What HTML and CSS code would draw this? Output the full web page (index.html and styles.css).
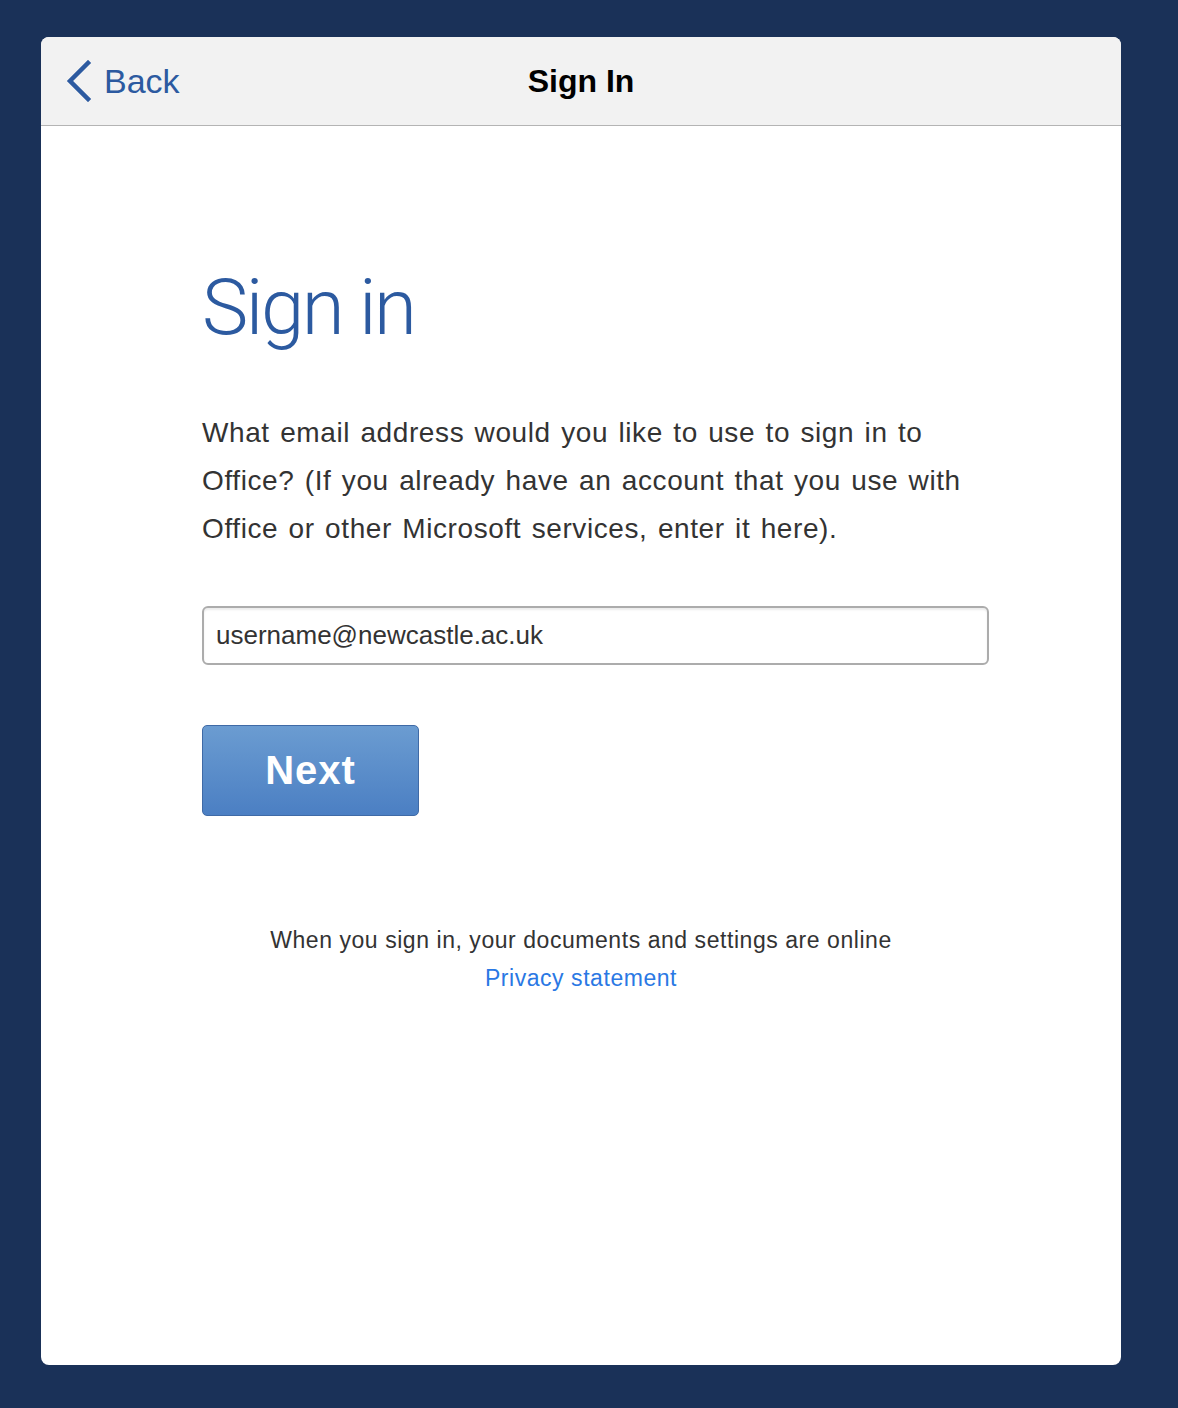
FILE: index.html
```html
<!DOCTYPE html>
<html lang="en">
<head>
  <meta charset="UTF-8">
  <title>Sign In</title>
  <link rel="stylesheet" href="styles.css">
</head>
<body>
  <div class="sheet">
    <div class="nav">
      <a class="back" href="#">
        <svg class="chevron" width="26" height="42" viewBox="0 0 26 42">
          <path d="M22 3 L4 21 L22 39" fill="none" stroke="#2c5aa0" stroke-width="4.5" stroke-linecap="square"/>
        </svg>
        <span>Back</span>
      </a>
      <div class="nav-title">Sign In</div>
    </div>

    <div class="content">
      <h1>Sign in</h1>
      <p class="intro">What email address would you like to use to sign in to Office? (If you already have an account that you use with Office or other Microsoft services, enter it here).</p>

      <form id="signinForm">
        <input type="email" class="email" value="username@newcastle.ac.uk">
        <button type="submit" class="next">Next</button>
      </form>
    </div>

    <div class="footer">
      <div>When you sign in, your documents and settings are online</div>
      <a href="#">Privacy statement</a>
    </div>
  </div>
</body>
</html>
```

FILE: styles.css
```css
body {
  margin: 0;
  padding: 37px 57px 43px 41px;
  background-color: #1a3158;
  font-family: "Liberation Sans", Arial, sans-serif;
  color: #333;
}
.sheet {
  height: 1328px;
  background-color: #fff;
  border-radius: 8px;
  overflow: hidden;
  display: flex;
  flex-direction: column;
}
.nav {
  position: relative;
  height: 89px;
  box-sizing: border-box;
  background-color: #f2f2f2;
  border-bottom: 1px solid #b4b4b4;
  display: flex;
  align-items: center;
  justify-content: center;
}
.back {
  position: absolute;
  left: 25px;
  top: 23px;
  display: flex;
  align-items: center;
  gap: 12px;
  color: #2c5aa0;
  text-decoration: none;
  font-size: 34px;
}
.back span {
  margin-top: 1px;
}
.nav-title {
  font-size: 32px;
  font-weight: bold;
  color: #000;
}
.content {
  padding: 137px 0 0 161px;
}
h1 {
  margin: 0;
  font-family: Roboto, "Liberation Sans", sans-serif;
  font-weight: 300;
  font-size: 78px;
  line-height: 90px;
  color: #2c5aa0;
  letter-spacing: -2.4px;
}
.intro {
  margin: 56px 0 0;
  width: 778px;
  font-size: 28px;
  line-height: 48px;
  letter-spacing: 0.6px;
  word-spacing: 2px;
  color: #333;
}
form {
  margin-top: 53px;
}
.email {
  display: block;
  box-sizing: border-box;
  width: 787px;
  height: 59px;
  padding: 0 12px;
  border: 2px solid #acacac;
  border-radius: 6px;
  box-shadow: inset 0 2px 2px rgba(0, 0, 0, 0.08);
  font-family: "Liberation Sans", Arial, sans-serif;
  font-size: 26px;
  color: #333;
  outline: none;
}
.next {
  display: block;
  margin-top: 60px;
  width: 217px;
  height: 91px;
  border: 1px solid #3f6aa6;
  border-radius: 5px;
  background: linear-gradient(#6b9cd1, #4b7fc3);
  color: #fff;
  font-family: "Liberation Sans", Arial, sans-serif;
  font-size: 40px;
  font-weight: bold;
  letter-spacing: 1px;
  cursor: pointer;
}
.footer {
  margin-top: 105px;
  text-align: center;
  font-size: 23px;
  line-height: 38px;
  letter-spacing: 0.55px;
  color: #333;
}
.footer a {
  color: #2a78e4;
  text-decoration: none;
}
```
